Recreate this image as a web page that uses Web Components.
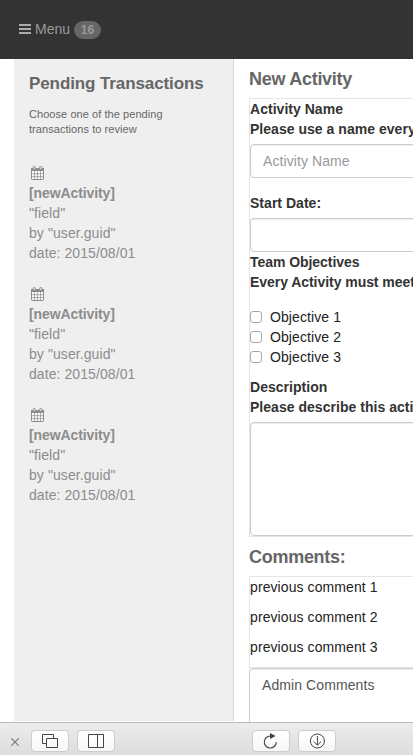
<!DOCTYPE html>
<html lang="en"><head><meta charset="utf-8"><title>New Activity</title>
<style>
html,body{margin:0;height:100%;overflow:hidden;background:#fff}
body{font:14px/20px "Liberation Sans",Arial,sans-serif;color:#333}
</style></head><body>
<activity-app></activity-app>
<script>
const define=(name,html,init)=>{
  const t=document.createElement('template');t.innerHTML=html;
  customElements.define(name,class extends HTMLElement{
    constructor(){super();this.attachShadow({mode:'open'}).append(t.content.cloneNode(true));}
    connectedCallback(){if(init)init(this,this.shadowRoot);}
  });
};
define('menu-bar',`<style>
:host{display:flex;align-items:center;height:59px;box-sizing:border-box;padding-left:19px;background:#333;color:#999;flex:none}
svg{width:12px;height:10px;margin:0 4px 1px 0;display:block}
.m{font-size:14px;width:39px;white-space:nowrap;margin-bottom:1px}
.b{background:#666;color:#999;font-weight:bold;font-size:12px;line-height:18px;width:27px;text-align:center;border-radius:9px;margin-top:1px}
</style><svg viewBox="0 0 12 10"><path fill="#aaa" d="M0 0h12v2H0zM0 4h12v2H0zM0 8h12v2H0z"/></svg><span class="m">Menu</span><span class="b"><slot></slot></span>`);
define('pending-item',`<style>
:host{display:block;height:100px;margin-bottom:21px;color:#8c8c8c;letter-spacing:.08px;white-space:nowrap}
div{height:20px}svg{display:block;width:14px;height:14px;padding:3px 0 3px 2px}b{letter-spacing:-.1px}
</style><div><svg viewBox="0 0 14 14"><path fill="#fafafa" d="M0 2h13v12H0z"/><g fill="none" stroke="#8c8c8c"><rect x=".5" y="2.5" width="12" height="11" rx=".6"/><path stroke-width=".7" d="M3.5 5v8M6.5 5v8M9.5 5v8M1 7.7h11M1 10.6h11"/></g><path fill="#8c8c8c" d="M0 2h13v3H0z"/><rect x="2.2" y=".4" width="2.2" height="3.2" rx="1" fill="#ddd" stroke="#8c8c8c" stroke-width=".9"/><rect x="8.6" y=".4" width="2.2" height="3.2" rx="1" fill="#ddd" stroke="#8c8c8c" stroke-width=".9"/></svg></div>
<div><b>[newActivity]</b></div><div>"field"</div><div>by "user.guid"</div><div>date: 2015/08/01</div>`);
define('pending-panel',`<style>
:host{display:block;width:219px;box-sizing:content-box;border-right:1px solid #d8d8d8;background:#efefef;margin-left:14px;height:662px;flex:none}
section{padding:15px 0 0 15px}h2{margin:0;font-size:17px;line-height:20px;color:#666;white-space:nowrap;letter-spacing:-.1px}
p{margin:13px 0 26px;font-size:11px;line-height:15px;color:#666;letter-spacing:.06px}
</style><section><h2>Pending Transactions</h2><p>Choose one of the pending<br>transactions to review</p><slot></slot></section>`);
define('section-title',`<style>:host{display:block;font-size:18px;line-height:20px;font-weight:bold;color:#666;white-space:nowrap;letter-spacing:-.28px}</style><slot></slot>`);
define('field-group',`<style>:host{display:block;border:1px solid #e5e5e5;box-sizing:border-box;white-space:nowrap}</style><slot></slot>`);
define('field-label',`<style>:host{display:block;font-weight:bold;height:20px;letter-spacing:var(--track,.03px)}</style><slot></slot>`);
define('text-box',`<style>
:host{display:block;box-sizing:border-box;height:34px;border:1px solid #ccc;border-radius:4px;background:#fff;box-shadow:inset 0 1px 1px rgba(0,0,0,.075);padding:6px 12px;color:#999}
:host([tall]){height:114px}
:host([dark]){color:#555}
</style><slot></slot>`);
define('check-row',`<style>:host{display:flex;align-items:center;height:20px}i{box-sizing:border-box;width:12px;height:12px;border:1px solid #aaa;border-radius:3px;margin-right:8px;background:#fff}</style><i></i><span><slot></slot></span>`);
define('tool-button',`<style>:host{display:block;box-sizing:border-box;width:38px;height:22px;border:1px solid #ccc;border-radius:4px;background:linear-gradient(#fff,#f7f7f7)}svg{display:block;width:36px;height:20px;fill:none;stroke:#444}</style>
<svg viewBox="0 0 36 20"></svg>`,(h,r)=>{r.querySelector('svg').innerHTML=({
 tabs:'<path d="M14 12.5H10.5V3.5H21.5V7"/><path d="M14.5 7.5h11v9h-11z"/>',
 split:'<path d="M10.5 3.5h15v13h-15zM19.5 3.5v13"/>',
 reload:'<path stroke-width="1.1" d="M17.3 5a6 6 0 1 0 6 6"/><path fill="#444" stroke="none" d="M17 2l5.6 3.1-5.6 3z"/>',
 down:'<circle cx="18.4" cy="10" r="7"/><path d="M18.4 5v9M14.8 10.6l3.6 3.6 3.6-3.6"/>'})[h.getAttribute('icon')];});
define('tool-bar',`<style>
:host{display:flex;align-items:flex-start;box-sizing:border-box;height:33px;border-top:1px solid #bbb;background:linear-gradient(#ececec,#ddd);padding:7px 0 0 11px;flex:none}
svg{width:8px;height:8px;margin:8px 12px 0 0;stroke:#777;stroke-width:1.1}
.a{margin-right:8px}.g{margin-right:137px}
</style><svg viewBox="0 0 8 8"><path d="M.3.3l7.4 7.4M7.7.3L.3 7.7"/></svg><tool-button class="a" icon="tabs"></tool-button><tool-button class="g" icon="split"></tool-button><tool-button class="a" icon="reload"></tool-button><tool-button icon="down"></tool-button>`);
define('activity-form',`<style>
:host{display:block;width:300px;margin-left:15px;padding-top:10px;flex:none;letter-spacing:.09px}
.one{height:439px;margin-top:9px}.two{height:92px;margin-top:9px}
text-box{margin-top:5px}.date{margin-top:15px}.team{margin:0 0 15px;--track:-.05px}.desc{margin-top:10px}
.c{margin-top:10px}p{margin:0 0 10px;color:#222}check-row{color:#222}.admin{margin-top:0}
</style>
<section-title>New Activity</section-title>
<field-group class="one">
<field-label>Activity Name</field-label><field-label>Please use a name every</field-label><text-box>Activity Name</text-box>
<field-label class="date">Start Date:</field-label><text-box></text-box>
<div class="team"><field-label>Team Objectives</field-label><field-label>Every Activity must meet</field-label></div>
<check-row>Objective 1</check-row><check-row>Objective 2</check-row><check-row>Objective 3</check-row>
<field-label class="desc">Description</field-label><field-label>Please describe this acti</field-label><text-box tall></text-box>
</field-group>
<section-title class="c">Comments:</section-title>
<field-group class="two"><p>previous comment 1</p><p>previous comment 2</p><p>previous comment 3</p></field-group>
<text-box class="admin" tall dark>Admin Comments</text-box>`);
define('activity-app',`<style>
:host{display:flex;flex-direction:column;width:413px;height:755px;overflow:hidden}
main{display:flex;height:663px;overflow:hidden;flex:none}
</style><menu-bar>16</menu-bar><main><pending-panel><pending-item></pending-item><pending-item></pending-item><pending-item></pending-item></pending-panel><activity-form></activity-form></main><tool-bar></tool-bar>`);
</script></body></html>
